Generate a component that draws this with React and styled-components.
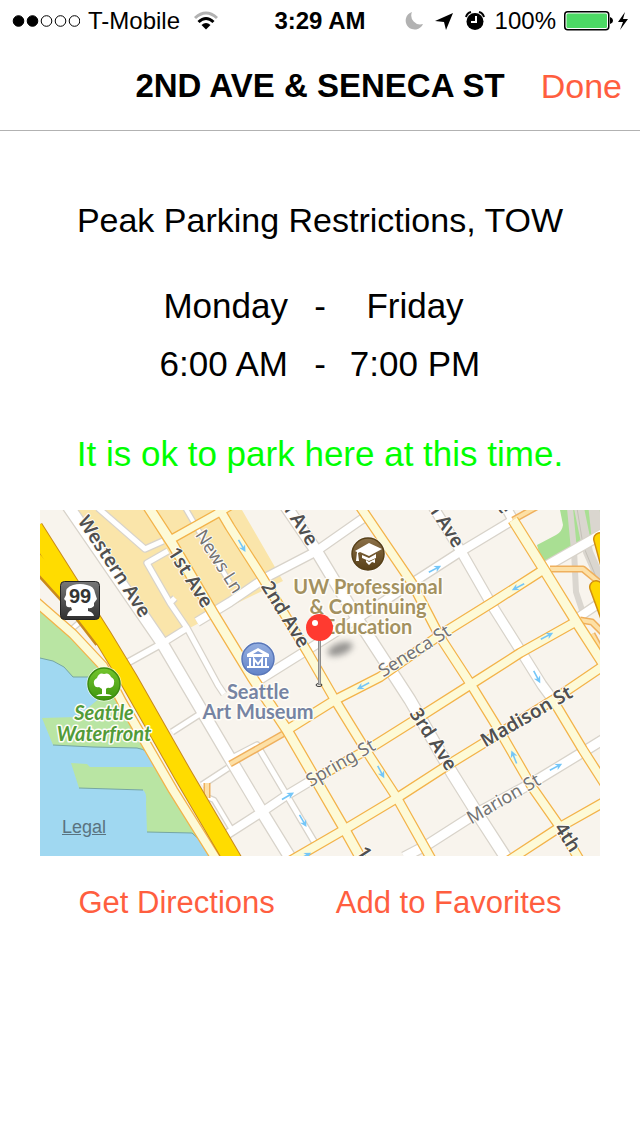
import React from "react";
import styled, { createGlobalStyle } from "styled-components";

const GlobalStyle = createGlobalStyle`
  * { box-sizing: border-box; }
  body {
    margin: 0;
    background: #fff;
    color: #000;
    font-family: "Liberation Sans", Arial, sans-serif;
  }
`;

const Screen = styled.div`
  min-height: 100vh;
`;

const StatusBar = styled.div`
  display: grid;
  grid-template-columns: 1fr auto 1fr;
  align-items: center;
  height: 40px;
  padding: 2px 12px 0;
  font-size: 24px;
`;

const StatusGroup = styled.div`
  display: flex;
  align-items: center;
  justify-content: ${(p) => (p.$end ? "flex-end" : "flex-start")};
  gap: 8px;
  svg { display: block; }
`;

const Carrier = styled.span`
  padding-right: 5px;
`;

const Clock = styled.time`
  font-weight: 700;
`;

const NavBar = styled.header`
  display: grid;
  grid-template-columns: 1fr auto 1fr;
  align-items: center;
  height: 91px;
  padding: 2px 18px 0;
  border-bottom: 1px solid #b2b2b2;
`;

const Title = styled.h1`
  grid-column: 2;
  margin: 0;
  font-size: 33px;
  font-weight: 700;
  white-space: nowrap;
`;

const TextButton = styled.button`
  justify-self: end;
  padding: 0;
  border: 0;
  background: none;
  color: #ff5e3f;
  font-family: inherit;
  font-size: ${(p) => p.$size}px;
  line-height: 40px;
  white-space: nowrap;
  cursor: pointer;
`;

const Content = styled.main`
  padding: 69px 40px 0;
`;

const Line = styled.p`
  margin: 0;
  font-size: ${(p) => (p.$ok ? 35 : 34)}px;
  line-height: 40px;
  text-align: center;
  color: ${(p) => (p.$ok ? "#00ff00" : "#000")};
`;

const Schedule = styled.div`
  display: grid;
  grid-template-columns: 126px 64px 126px;
  justify-content: center;
  row-gap: 18px;
  padding: 46px 0 50px;
  font-size: 35px;
  line-height: 40px;
  text-align: center;
  white-space: nowrap;
  span { display: flex; justify-content: center; }
  span:nth-child(3n + 1) { justify-content: flex-end; }
`;

const MapFrame = styled.section`
  position: relative;
  margin-top: 36px;
`;

const MapDrawing = styled.svg`
  display: block;
  width: 100%;
  height: auto;
`;

const Legal = styled.a`
  position: absolute;
  left: 22px;
  bottom: 18px;
  color: #5a7380;
  font-size: 18px;
  line-height: 22px;
`;

const Actions = styled.div`
  display: flex;
  justify-content: center;
  gap: 61px;
  padding-top: 27px;
`;

const StreetName = styled.text`
  font-family: "Noto Sans", "Open Sans", sans-serif;
  font-size: ${(p) => (p.$minor ? 18 : 19)}px;
  font-weight: ${(p) => (p.$minor ? 400 : 600)};
  fill: ${(p) => (p.$minor ? "#737373" : "#505050")};
  stroke: #fffdf8;
  stroke-width: 2px;
  stroke-linejoin: round;
  paint-order: stroke;
`;

const PlaceName = styled.text`
  font-family: Lato, "Noto Sans", sans-serif;
  font-size: 20px;
  font-weight: 700;
  font-variant-ligatures: none;
  font-style: ${(p) => (p.$italic ? "italic" : "normal")};
  fill: ${(p) => p.$color};
  text-anchor: middle;
  stroke: #fffdf8;
  stroke-width: 3px;
  stroke-linejoin: round;
  paint-order: stroke;
`;

const ShieldNumber = styled.text`
  font-family: "Liberation Sans", Arial, sans-serif;
  font-size: 20px;
  font-weight: 700;
  fill: #333;
  text-anchor: middle;
`;

const whiteStreets = [
  { w: 11, d: "M68 506L162 643L228 755L262 812L294 864" },
  { w: 5, d: "M98 508L145 549L163 541M168 551L147 563L170 603L187 628L218 685L224 694M170 603L175 598" },
  { w: 11, d: "M285 505L317 552L358 620L410 700L452 773L477 813L510 864" },
  { w: 9, d: "M432 505L462 553L493 607L522 653L542 685L553 700" },
  { w: 9, d: "M503 502L513 520" },
  { w: 6, d: "M127 663L163 643L187 628" },
  { w: 8, d: "M197 622L230 602L265 578L315 552L365 517" },
  { w: 8, d: "M256 682L312 647L358 618L412 583L460 552L513 520" },
  { w: 9, d: "M543 568L604 533" },
  { w: 8, d: "M226 835L262 812L287 795L312 780" },
  { w: 8, d: "M576 619L604 600" },
  { w: 9, d: "M404 857L427 845L477 813L532 783L583 752L604 739" },
  { w: 5, d: "M172 732L200 714M202 785L228 768M228 760L257 745L315 843" },
  { w: 4, d: "M183 504L197 528L230 583M73 628L80 622L100 630L125 672M207 797L214 800L232 830" },
];

const yellowStreets = [
  { w: 9, d: "M147 505L173 545L213 613L252 677L287 730L345 830L364 864" },
  { w: 8, d: "M217 505L230 527L262 577L308 653L335 700L367 752L397 798L434 864" },
  { w: 8, d: "M359 505L412 583L440 637L470 683L502 735L532 787L560 827L582 864" },
  { w: 9, d: "M513 520L543 568L577 623L606 668" },
  { w: 8, d: "M553 700L583 750L606 786" },
  { w: 7, d: "M170 540L220 512L230 506" },
  { w: 8, d: "M287 730L335 700L380 677L440 635L493 602L543 570" },
  { w: 8, d: "M318 777L372 747L415 720L470 685L520 653L577 621" },
  { w: 8, d: "M290 861L347 828L397 798L448 765L500 733L553 700L606 664" },
  { w: 8, d: "M508 861L560 827L606 801" },
  { w: 8, d: "M34 600L73 634L103 666L122 702L173 790L218 862" },
];

const ramps = [
  "M230 764L283 734",
  "M207 783L207 798",
  "M513 520L540 505",
  "M550 569L583 569L606 588",
  "M580 620L592 622L606 636",
  "M592 634L604 656",
];

const oneWayArrows = [
  [242, 546, 60], [435, 569, -28], [518, 587, 152], [547, 636, -28],
  [537, 677, 62], [363, 686, 152], [288, 796, -30], [303, 821, 60],
  [381, 772, 62], [305, 856, -28], [514, 757, -112], [556, 767, -28],
];

const streetNames = [
  { name: "Western Ave", x: 115, y: 566, a: 57 },
  { name: "1st Ave", x: 191, y: 577, a: 58 },
  { name: "News Ln", x: 220, y: 561, a: 57, minor: true },
  { name: "2nd Ave", x: 286, y: 614, a: 58 },
  { name: "3rd Ave", x: 295, y: 514, a: 57 },
  { name: "5th Ave", x: 441, y: 516, a: 57 },
  { name: "6th Ave", x: 489, y: 482, a: 57 },
  { name: "Seneca St", x: 414, y: 650, a: -32, minor: true },
  { name: "Spring St", x: 340, y: 762, a: -30, minor: true },
  { name: "3rd Ave", x: 434, y: 739, a: 57 },
  { name: "Madison St", x: 526, y: 716, a: -30 },
  { name: "Marion St", x: 503, y: 798, a: -30, minor: true },
  { name: "4th", x: 568, y: 837, a: 57 },
  { name: "1st Ave", x: 380, y: 876, a: 57 },
];

function StreetLayer({ streets, edge, fill }) {
  return (
    <g fill="none" strokeLinejoin="round">
      {streets.map((s) => <path key={s.d} d={s.d} stroke={edge} strokeWidth={s.w + 2.5} />)}
      {streets.map((s) => <path key={s.d} d={s.d} stroke={fill} strokeWidth={s.w} />)}
    </g>
  );
}

function PlaceBadge({ x, y, fill, edge, children }) {
  return (
    <g transform={`translate(${x} ${y})`}>
      <circle r="17.5" fill="#fff" opacity="0.7" />
      <circle r="16" fill={fill} stroke={edge} strokeWidth="1.5" />
      {children}
    </g>
  );
}

function StreetMap() {
  return (
    <MapDrawing viewBox="40 510 560 346" role="img" aria-label="Map of 2nd Ave and Seneca St">
      <defs>
        <linearGradient id="brown" x2="0" y2="1"><stop stopColor="#8b7048" /><stop offset="1" stopColor="#594018" /></linearGradient>
        <linearGradient id="blue" x2="0" y2="1"><stop stopColor="#94aee0" /><stop offset="1" stopColor="#6384c8" /></linearGradient>
        <linearGradient id="green" x2="0" y2="1"><stop stopColor="#73c52d" /><stop offset="1" stopColor="#3f960d" /></linearGradient>
        <linearGradient id="shield" x2="0" y2="1"><stop stopColor="#777" /><stop offset="1" stopColor="#303030" /></linearGradient>
        <filter id="soft" x="-50%" y="-80%" width="200%" height="260%"><feGaussianBlur stdDeviation="3" /></filter>
      </defs>
      <rect x="40" y="510" width="560" height="346" fill="#f8f4ed" />
      <path d="M68 510L162 643L225 609L283 581L242 510Z" fill="#fae5aa" />
      <path d="M40 600L103 667L173 790L214 856H40Z" fill="#b9e5a3" />
      <path d="M40 658L53 661L64 667L73 677L90 677L101 697L77 717L42 718L53 745L93 747L137 748Q155 752 153 767L90 767L87 764L71 763L79 788L143 790Q147 793 146 803L147 832L192 833L203 843L212 856H40Z" fill="#a0d8f1" />
      <path d="M40 658L53 661L64 667L73 677L90 677M53 745L93 747L137 748Q149 750 152 758M79 788L143 790M147 832L192 833L203 843" fill="none" stroke="#76a6a3" strokeWidth="1" />
      <path d="M560 510L563 525Q562 532 556 535L537 545L543 568L600 536V510Z" fill="#a9df93" />
      <g fill="none" stroke="#dad6cf">
        <path d="M570 508L574 550L576 592L584 616" strokeWidth="6" />
        <path d="M579 508L588 552L604 588" strokeWidth="10" />
        <path d="M594 508L597 536" strokeWidth="11" />
      </g>
      <path d="M577 508L583 545L598 582" fill="none" stroke="#c4c0b8" strokeWidth="1" />
      <StreetLayer streets={whiteStreets} edge="#d8d3ca" fill="#fff" />
      <g fill="none" strokeLinejoin="round">
        {ramps.map((d) => <path key={d} d={d} stroke="#efb05e" strokeWidth="7" />)}
        {ramps.map((d) => <path key={d} d={d} stroke="#fde0a6" strokeWidth="4" />)}
      </g>
      <StreetLayer streets={yellowStreets} edge="#f3b34a" fill="#fdfad7" />
      <g fill="none" strokeLinejoin="round">
        <path d="M32 556L72 600L103 640M34 528L103 637L129 680L183 775L234 862" stroke="#c98a1c" strokeWidth="19" />
        <path d="M32 556L72 600L103 640" stroke="#ffdc00" strokeWidth="14" />
        <path d="M34 528L103 637L129 680L183 775L234 862" stroke="#ffdc00" strokeWidth="17" />
        <path d="M600 539L609 572M596 587L608 620" stroke="#d08e10" strokeWidth="14" strokeLinecap="round" />
        <path d="M600 539L609 572M596 587L608 620" stroke="#ffd600" strokeWidth="11" strokeLinecap="round" />
      </g>
      {oneWayArrows.map(([x, y, a]) => (
        <g key={`${x}-${y}`} transform={`translate(${x} ${y}) rotate(${a})`}>
          <path d="M-7 0H4" stroke="#74c6f8" strokeWidth="1.6" />
          <path d="M7 0L0 -3.5L2 0L0 3.5Z" fill="#74c6f8" />
        </g>
      ))}
      {streetNames.map((s) => (
        <StreetName
          key={`${s.name}-${s.x}`}
          $minor={s.minor}
          textAnchor="middle"
          dominantBaseline="central"
          transform={`translate(${s.x} ${s.y}) rotate(${s.a})`}
        >
          {s.name}
        </StreetName>
      ))}

      <g transform="translate(60 581)">
        <rect x="0.5" y="0.5" width="39" height="38" rx="4" fill="url(#shield)" stroke="#242424" />
        <path d="M13 4Q20 2 27 4Q34 5 35 12L37 18L34 22L34 25Q31 28 28 27L28 30Q33 31 34 35H7Q8 30 12 29L11 26Q6 27 6 23L6 20L4 18L6 14Q5 6 13 4Z" fill="#fff" />
        <ShieldNumber x="20" y="22">99</ShieldNumber>
      </g>

      <PlaceBadge x={368} y={554} fill="url(#brown)" edge="#574018">
        <path d="M-13 -3L1 -11L14 -5L1 2L-8 -2L-10 -1L-9 7H-12L-11 -2Z" fill="#fff" />
        <path d="M-6 1L1 4L8 0V4L1 7L-6 4ZM-2 6L1 8L7 5V9L4 8L1 11L-2 8Z" fill="#fff" />
      </PlaceBadge>
      <PlaceBadge x={258} y={659} fill="url(#blue)" edge="#5876b8">
        <path d="M-11 -5L0 -11L11 -5V-2H-11ZM-9 -1H-7V7H-9ZM7 -1H9V7H7ZM-11 7H11V9H-11Z" fill="#fff" />
        <path d="M-5 -5L0 -8L5 -5Z" fill="#7f9bd6" />
        <path d="M-4 7V0L0 5L4 0V7" fill="none" stroke="#fff" strokeWidth="2" />
      </PlaceBadge>
      <PlaceBadge x={104} y={684} fill="url(#green)" edge="#3b8a10">
        <path d="M-2 10L-2 5L-5 3Q-9 4 -10 0Q-11 -4 -7 -6Q-5 -12 0 -10Q5 -12 7 -7Q11 -5 10 -1Q10 3 6 4Q3 3 2 5L2 10Q6 10 8 12H-8Q-6 10 -2 10Z" fill="#fff" />
      </PlaceBadge>

      <PlaceName $color="#a39160" x="368" y="594">UW Professional</PlaceName>
      <PlaceName $color="#a39160" x="368" y="614">&amp; Continuing</PlaceName>
      <PlaceName $color="#a39160" x="368" y="634">Education</PlaceName>
      <PlaceName $color="#7684a3" x="258" y="699">Seattle</PlaceName>
      <PlaceName $color="#7684a3" x="258" y="719">Art Museum</PlaceName>
      <PlaceName $italic $color="#519b38" x="104" y="720">Seattle</PlaceName>
      <PlaceName $italic $color="#519b38" x="104" y="741">Waterfront</PlaceName>

      <ellipse cx="340" cy="649" rx="13" ry="6" transform="rotate(-20 340 649)" fill="#555" opacity="0.6" filter="url(#soft)" />
      <ellipse cx="319" cy="685" rx="3" ry="1.5" fill="none" stroke="#333" />
      <path d="M319.500 638V685" stroke="#8d8d8d" strokeWidth="3" />
      <path d="M319.500 638V684" stroke="#bdbdbd" strokeWidth="1" />
      <circle cx="319.500" cy="627.500" r="13.500" fill="#ff3a30" />
      <circle cx="315" cy="623" r="3" fill="#fff" />
    </MapDrawing>
  );
}

function Signal() {
  return (
    <svg width="68" height="14" aria-hidden="true">
      {[6, 20, 34, 48, 62].map((x, i) => (
        <circle key={x} cx={x + 0.5} cy="7" r="5.300" fill={i < 2 ? "#000" : "none"} stroke="#000" />
      ))}
    </svg>
  );
}

function Wifi() {
  return (
    <svg width="26" height="20" viewBox="0 0 26 20" aria-hidden="true">
      <path d="M2 7Q13 -3 24 7" fill="none" stroke="#b2b2b2" strokeWidth="3" />
      <path d="M5.500 11Q13 4 20.500 11" fill="none" stroke="#000" strokeWidth="3" />
      <path d="M8.500 14Q13 10 17.500 14L13 18.500Z" />
    </svg>
  );
}

function StatusIcons() {
  return (
    <svg width="82" height="20" viewBox="0 0 82 20" aria-hidden="true">
      <path d="M7 1A9 9 0 1 0 18 13A9 9 0 0 1 7 1Z" fill="#b2b2b2" />
      <path d="M48 2L41 19L39 11L30 10Z" />
      <circle cx="70" cy="10.500" r="8.500" />
      <path d="M61 6Q62 2 66 1M74 1Q78 2 79 6" fill="none" stroke="#000" strokeWidth="2" />
      <path d="M71 5V11H66" fill="none" stroke="#fff" strokeWidth="2" />
    </svg>
  );
}

function Battery() {
  return (
    <svg width="64" height="20" viewBox="0 0 64 20" aria-hidden="true">
      <rect x="0.750" y="0.750" width="44" height="18" rx="3" fill="#fff" stroke="#000" strokeWidth="1.500" />
      <rect x="2.500" y="2.500" width="40.500" height="14.500" rx="1.500" fill="#4cd964" />
      <path d="M46 6Q49 7 49 10Q49 12 46 13Z" />
      <path d="M61 1L54 11H59L56 19L64 8H59Z" />
    </svg>
  );
}

export default function App() {
  return (
    <Screen>
      <GlobalStyle />
      <StatusBar>
        <StatusGroup><Signal /><Carrier>T-Mobile</Carrier><Wifi /></StatusGroup>
        <Clock>3:29 AM</Clock>
        <StatusGroup $end><StatusIcons /><span>100%</span><Battery /></StatusGroup>
      </StatusBar>
      <NavBar>
        <Title>2ND AVE &amp; SENECA ST</Title>
        <TextButton type="button" $size={34}>Done</TextButton>
      </NavBar>
      <Content>
        <Line>Peak Parking Restrictions, TOW</Line>
        <Schedule>
          <span>Monday</span><span>-</span><span>Friday</span>
          <span>6:00 AM</span><span>-</span><span>7:00 PM</span>
        </Schedule>
        <Line $ok>It is ok to park here at this time.</Line>
        <MapFrame>
          <StreetMap />
          <Legal href="#legal">Legal</Legal>
        </MapFrame>
        <Actions>
          <TextButton type="button" $size={31}>Get Directions</TextButton>
          <TextButton type="button" $size={31}>Add to Favorites</TextButton>
        </Actions>
      </Content>
    </Screen>
  );
}
